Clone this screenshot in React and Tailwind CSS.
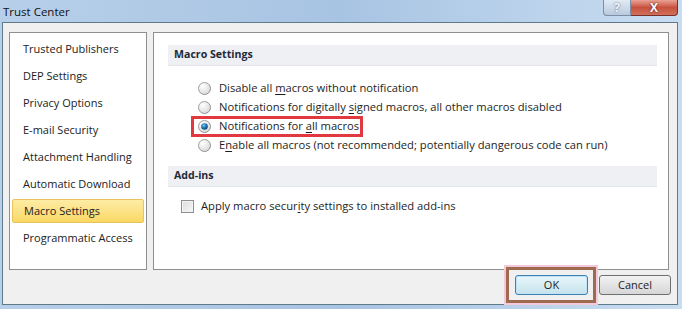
import { useState } from 'react'

const NAV_ITEMS = [
  'Trusted Publishers',
  'DEP Settings',
  'Privacy Options',
  'E-mail Security',
  'Attachment Handling',
  'Automatic Download',
  'Macro Settings',
  'Programmatic Access',
]

// label parts: [before, mnemonic, after]
const MACRO_OPTIONS = [
  ['Disable all ', 'm', 'acros without notification'],
  ['Notifications for digitally ', 's', 'igned macros, all other macros disabled'],
  ['Notifications for ', 'a', 'll macros'],
  ['E', 'n', 'able all macros (not recommended; potentially dangerous code can run)'],
]

function Radio({ checked }) {
  return (
    <svg width="13" height="13" viewBox="0 0 13 13" className="shrink-0">
      <defs>
        <linearGradient id="rb-ring" x1="0" y1="0" x2="1" y2="1">
          <stop offset="0" stopColor="#a7a7a7" />
          <stop offset="1" stopColor="#8a8a8a" />
        </linearGradient>
        <radialGradient id="rb-fill" cx="0.35" cy="0.3" r="0.8">
          <stop offset="0" stopColor="#ffffff" />
          <stop offset="1" stopColor="#d6d6d6" />
        </radialGradient>
        <radialGradient id="rb-dot" cx="0.4" cy="0.35" r="0.7">
          <stop offset="0" stopColor="#7fd0f4" />
          <stop offset="0.5" stopColor="#1f73b0" />
          <stop offset="1" stopColor="#0e3e6a" />
        </radialGradient>
      </defs>
      <circle cx="6.5" cy="6.5" r="6" fill="url(#rb-fill)" stroke="url(#rb-ring)" strokeWidth="1" />
      {checked && <circle cx="6.5" cy="6.5" r="3.3" fill="url(#rb-dot)" />}
    </svg>
  )
}

function Mnemonic({ parts }) {
  return (
    <span>
      {parts[0]}
      <span className="underline underline-offset-[2px]">{parts[1]}</span>
      {parts[2]}
    </span>
  )
}

function SectionBar({ title }) {
  return (
    <div className="h-[21px] bg-[#eef0f3] border-b border-[#e2e5ea] flex items-center pl-[6px] font-bold text-[10.6px] text-[#1e2a3a]">
      {title}
    </div>
  )
}

export default function App() {
  const [selected] = useState(2)

  return (
    <div
      className="w-[682px] h-[309px] flex flex-col overflow-hidden bg-gradient-to-r from-[#b7cfe9] via-[#a8c4e3] to-[#c9ddf1] text-[11px] text-[#1e1e1e]"
      style={{ fontFamily: '"Open Sans", "Noto Sans", Arial, sans-serif' }}
    >
      {/* title bar */}
      <div className="h-[22px] shrink-0 flex items-start">
        <div className="pl-[3px] pt-[3px] text-[11.5px] text-[#111]">Trust Center</div>
        <div className="ml-auto mr-[4px] flex">
          <div className="w-[28px] h-[16px] rounded-bl-[4px] border border-[#7a8ea6] border-t-0 bg-gradient-to-b from-[#e2ebf5] to-[#b9c9dc] flex items-center justify-center text-[12px] font-bold text-[#f4f6f9] [text-shadow:0_0_2px_#4a5a70] leading-none">
            ?
          </div>
          <div className="w-[47px] h-[16px] rounded-br-[4px] border border-[#7a2f2a] border-t-0 border-l-0 bg-gradient-to-b from-[#e8a293] via-[#c7503f] to-[#d0705a] flex items-center justify-center text-[12px] font-bold text-white [text-shadow:0_0_2px_#4a1010] leading-none">
            X
          </div>
        </div>
      </div>

      {/* dialog body */}
      <div className="flex-1 ml-[2px] mr-[4px] mb-[4px] bg-[#f0f0f0] border border-[#5f7b89] flex flex-col pt-[9px] pl-[6px]">
        <div className="flex gap-[6px]">
          {/* left nav */}
          <div className="w-[138px] h-[238px] bg-white border border-[#8e8f8f] pt-[4px] px-[2px] flex flex-col">
            {NAV_ITEMS.map(item => {
              const active = item === 'Macro Settings'
              return (
                <div
                  key={item}
                  className={`h-[24px] mb-[3px] flex items-center pl-[11px] rounded-[2px] text-[#222] ${
                    active
                      ? 'bg-gradient-to-b from-[#fdeca4] to-[#fbd863] border border-[#e8c45a] pl-[10px]'
                      : ''
                  }`}
                >
                  {item}
                </div>
              )
            })}
          </div>

          {/* right content */}
          <div className="w-[516px] h-[238px] bg-white border border-[#8e8f8f] pt-[12px] pl-[14px] pr-[11px] text-[11.2px]">
            <SectionBar title="Macro Settings" />
            <div className="pt-[13px] pl-[30px] flex flex-col">
              {MACRO_OPTIONS.map((parts, i) => (
                <div key={i} className="relative h-[19px] flex items-center gap-[8px]">
                  <Radio checked={i === selected} />
                  <Mnemonic parts={parts} />
                  {i === selected && (
                    <span className="absolute left-[-7px] top-[-1px] w-[172px] h-[21px] border-[3px] border-[#e2383f]" />
                  )}
                </div>
              ))}
            </div>
            <div className="mt-[11px]">
              <SectionBar title="Add-ins" />
            </div>
            <div className="pt-[11px] pl-[13px] flex items-center gap-[7px]">
              <span className="w-[13px] h-[13px] shrink-0 border border-[#8f8f8f] bg-gradient-to-br from-[#dcdcdc] to-[#f7f7f7] shadow-[inset_0_0_0_1px_#f4f4f4]" />
              <span>
                Apply macro secur<span className="underline underline-offset-[2px]">i</span>ty settings to installed add-ins
              </span>
            </div>
          </div>
        </div>

        {/* buttons */}
        <div className="mt-[5px] flex justify-end gap-[11px] pr-[6px]">
          <div className="relative">
            <button className="w-[73px] h-[20px] rounded-[3px] border border-[#3c7fb1] bg-gradient-to-b from-[#eaf6fb] to-[#c4e3ec] shadow-[inset_0_0_0_1px_#bfe3f7] text-[#1e1e1e]">
              OK
            </button>
            <span className="absolute left-[-9px] top-[-8px] w-[90px] h-[36px] border-[3px] border-[#9e6a50] outline outline-2 outline-[#f5c9dc]" />
          </div>
          <button className="w-[72px] h-[20px] rounded-[3px] border border-[#707070] bg-gradient-to-b from-[#f2f2f2] to-[#d6d6d6] text-[#1e1e1e]">
            Cancel
          </button>
        </div>
      </div>
    </div>
  )
}
